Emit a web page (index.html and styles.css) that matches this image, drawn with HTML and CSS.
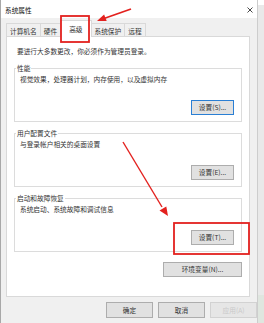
FILE: index.html
```html
<!DOCTYPE html>
<html lang="zh-CN">
<head>
    <meta charset="UTF-8">
    <meta name="viewport" content="width=device-width, initial-scale=1.0">
    <title>系统属性</title>
    <link rel="stylesheet" href="styles.css">
</head>
<body>
    <div class="screen">
        <div class="dialog">
            <div class="titlebar">
                <span class="title">系统属性</span>
                <svg class="close" width="6" height="6" viewBox="0 0 6 6">
                    <path d="M0.5 0.5 L5.5 5.5 M5.5 0.5 L0.5 5.5" stroke="#333" stroke-width="0.9" fill="none"/>
                </svg>
            </div>

            <div class="tabs">
                <span class="tab">计算机名</span>
                <span class="tab">硬件</span>
                <span class="tab on">高级</span>
                <span class="tab">系统保护</span>
                <span class="tab">远程</span>
            </div>

            <div class="panel">
                <p class="note">要进行大多数更改，你必须作为管理员登录。</p>

                <div class="group">
                    <span class="legend">性能</span>
                    <p class="desc">视觉效果，处理器计划，内存使用，以及虚拟内存</p>
                    <div class="actions"><button class="btn focus">设置(S)...</button></div>
                </div>

                <div class="group">
                    <span class="legend">用户配置文件</span>
                    <p class="desc">与登录帐户相关的桌面设置</p>
                    <div class="actions"><button class="btn">设置(E)...</button></div>
                </div>

                <div class="group">
                    <span class="legend">启动和故障恢复</span>
                    <p class="desc">系统启动、系统故障和调试信息</p>
                    <div class="actions"><button class="btn">设置(T)...</button></div>
                </div>

                <div class="actions env"><button class="btn wide">环境变量(N)...</button></div>
            </div>

            <div class="footer">
                <button class="btn foot">确定</button>
                <button class="btn foot">取消</button>
                <button class="btn foot off">应用(A)</button>
            </div>
        </div>
        <div class="edge"></div>

        <!-- red annotations drawn over the dialog -->
        <svg class="marks" width="264" height="323" viewBox="0 0 264 323">
            <rect x="61" y="16" width="28" height="26" fill="none" stroke="#e3211e" stroke-width="1.8"/>
            <line x1="131" y1="9" x2="104" y2="18.5" stroke="#e3211e" stroke-width="1.8"/>
            <polygon points="97,21 104.1,14.5 106.7,21" fill="#e3211e"/>

            <line x1="123" y1="142" x2="162" y2="207" stroke="#e3211e" stroke-width="1.4"/>
            <polygon points="168,216 166.3,206.4 159.5,210.4" fill="#e3211e"/>
            <rect x="174" y="223" width="75" height="31" fill="none" stroke="#e3211e" stroke-width="1.8"/>
        </svg>
    </div>
</body>
</html>
```

FILE: styles.css
```css
* {
    box-sizing: border-box;
}

body {
    margin: 0;
    font-family: "Noto Sans CJK SC", "Noto Sans", sans-serif;
    font-size: 6.7px;
    color: #333;
}

.screen {
    position: relative;
    width: 264px;
    height: 323px;
    display: grid;
    grid-template-columns: 257px 7px;
    overflow: hidden;
    background: #f0f0f0;
}

.dialog {
    display: flex;
    flex-direction: column;
    border-left: 1px solid #a8a8a8;
    background: #f0f0f0;
}

.titlebar {
    height: 18px;
    display: flex;
    align-items: center;
    justify-content: space-between;
    padding: 2px 4px 0 4px;
    background: #fff;
    color: #111;
}

.tabs {
    height: 18px;
    display: flex;
    align-items: flex-end;
    padding-left: 5px;
}
.tab {
    height: 13px;
    padding: 2px 3px 0;
    line-height: 11px;
    border: 1px solid #d9d9d9;
    border-bottom: none;
    white-space: nowrap;
}
.tab + .tab {
    margin-left: -1px;
}
.tab.on {
    position: relative;
    height: 17px;
    padding: 3px 8px 0;
    margin-bottom: -1px;
    background: #fff;
}

.panel {
    height: 261px;
    margin: 0 7px 0 5px;
    padding: 10px 7px 0 7px;
    background: #fff;
    border: 1px solid #d9d9d9;
}
.note {
    margin: 0 0 0 3px;
    line-height: 9px;
}

.group {
    margin-top: 12px;
    padding: 0 7px 6px 5px;
    border: 1px solid #dcdcdc;
}
.group + .group {
    margin-top: 11px;
}
.legend {
    display: block;
    width: fit-content;
    margin: -5px 0 0 -4px;
    padding: 0 1px;
    line-height: 9px;
    background: #fff;
}
.desc {
    margin: 2px 0 0;
    line-height: 9px;
}

.actions {
    display: flex;
    justify-content: flex-end;
    margin-top: 16px;
}
.env {
    margin-top: 10px;
}

.btn {
    width: 43px;
    height: 15px;
    padding: 0;
    font: inherit;
    line-height: 13px;
    color: #333;
    background: #e1e1e1;
    border: 1px solid #adadad;
}
.btn.focus {
    border-color: #2a7fd4;
}
.btn.wide {
    width: 79px;
}

.footer {
    display: flex;
    justify-content: flex-end;
    gap: 5px;
    padding-top: 5px;
}
.btn.foot {
    width: 47px;
    height: 16px;
}
.btn.off {
    color: #c9c9c9;
    background: #e6e6e6;
    border-color: #d2d2d2;
}

.edge {
    background: linear-gradient(#fff 0 5px, #e9e9e9 5px 295px, #dfe6df 295px);
    border-left: 1px solid #cdcdcd;
}

.marks {
    position: absolute;
    left: 0;
    top: 0;
    pointer-events: none;
}
```
